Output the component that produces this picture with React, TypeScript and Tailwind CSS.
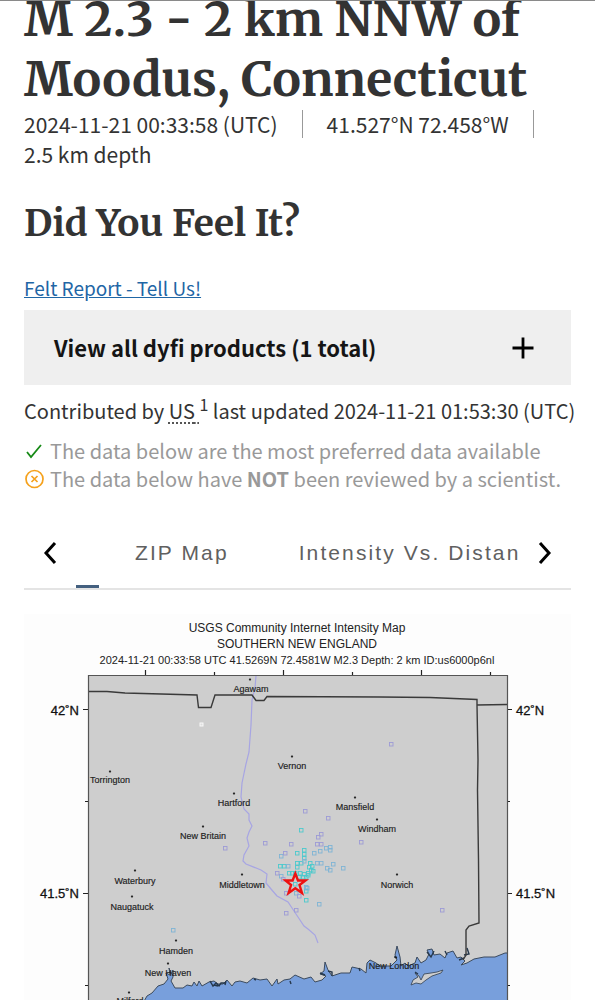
import type { ReactNode } from 'react';

type Place = { name: string; x: number; y: number; dot: [number, number] };

const places: Place[] = [
  { name: 'Agawam', x: 251, y: 692, dot: [250, 680] },
  { name: 'Torrington', x: 110, y: 783, dot: [110, 772] },
  { name: 'Vernon', x: 292, y: 769, dot: [292, 757] },
  { name: 'Hartford', x: 234, y: 806, dot: [234, 794] },
  { name: 'Mansfield', x: 355, y: 810, dot: [355, 798] },
  { name: 'Windham', x: 377, y: 832, dot: [377, 820] },
  { name: 'New Britain', x: 203, y: 839, dot: [203, 827] },
  { name: 'Waterbury', x: 135, y: 884, dot: [135, 871] },
  { name: 'Middletown', x: 242, y: 888, dot: [242, 875] },
  { name: 'Norwich', x: 397, y: 888, dot: [397, 875] },
  { name: 'Naugatuck', x: 132, y: 910, dot: [132, 897] },
  { name: 'Hamden', x: 176, y: 954, dot: [176, 941] },
  { name: 'New Haven', x: 168, y: 976, dot: [168, 964] },
  { name: 'New London', x: 394, y: 969, dot: [396, 958] },
  { name: 'Milford', x: 130, y: 1004, dot: [129, 993] },
];

const cyan = '#4cc9cd';
const blue = '#7fb4d4';
const violet = '#9d9bd6';

const reports: Record<string, [number, number][]> = {
  [cyan]: [
    [301, 830], [297, 853], [304, 850], [304, 854], [304, 858], [297, 863], [301, 863], [297, 867],
    [292, 873], [295, 873], [300, 873], [304, 874], [308, 873], [311, 870], [313, 871], [309, 867],
    [312, 866], [306, 877], [303, 877], [299, 877], [289, 873], [306, 891], [306, 900], [280, 866],
    [284, 866], [310, 863], [308, 875], [295, 884],
  ],
  [blue]: [
    [281, 856], [288, 866], [314, 853], [320, 851], [317, 863], [321, 863], [327, 868], [330, 870],
    [326, 848], [330, 850], [330, 847], [343, 868], [319, 904], [173, 930], [281, 876], [306, 887],
    [296, 893], [333, 864], [304, 861], [307, 888],
  ],
  [violet]: [
    [305, 811], [328, 818], [321, 834], [318, 837], [317, 844], [321, 844], [361, 842], [391, 744],
    [442, 910], [265, 843], [291, 844], [285, 853], [277, 873], [283, 879], [286, 893], [286, 913],
    [296, 910], [299, 896], [225, 848],
  ],
};

const coast =
  'M143 1003L147 996L152 993L158 986L164 984L168 979L166 973L170 975L169 968L171 974L173 970L173 977L171 981L175 988L183 988L187 985L192 986L194 982L197 986L199 981L202 986L209 982L214 981L218 984L223 984L227 980L232 986L235 982L240 981L247 983L253 978L260 980L267 979L272 986L277 979L278 984L284 980L290 979L295 975L304 979L311 977L315 982L322 980L326 976L320 974L324 971L325 962L328 970L332 976L341 973L350 973L352 967L361 969L366 973L367 963L370 960L376 963L380 966L391 966L397 960L395 955L397 946L400 957L401 966L405 963L408 966L415 963L417 957L421 963L426 960L429 954L427 950L432 949L434 955L440 954L445 958L447 953L453 951L457 958L461 957L465 961L461 965L467 963L474 959L484 957L495 957L505 953L507 953';

function Check() {
  return (
    <svg className="h-5 w-5 shrink-0" viewBox="0 0 20 20" fill="none" stroke="#168a16" strokeWidth="1.8" aria-hidden="true">
      <path d="M3 11l4 5L17 4" />
    </svg>
  );
}

function CircleX() {
  return (
    <svg className="h-5 w-5 shrink-0" viewBox="0 0 20 20" fill="none" stroke="#f5a11c" strokeWidth="1.7" aria-hidden="true">
      <circle cx="10.500" cy="10" r="8.500" />
      <path d="M7.500 7l6 6M13.500 7l-6 6" />
    </svg>
  );
}

function Arrow({ label, d }: { label: string; d: string }) {
  return (
    <button type="button" aria-label={label} className="flex w-13 shrink-0 items-center justify-center">
      <svg className="h-6 w-6" viewBox="0 0 24 24" fill="none" stroke="#000" strokeWidth="3" aria-hidden="true">
        <path d={d} />
      </svg>
    </button>
  );
}

function Status({ icon, children }: { icon: ReactNode; children: ReactNode }) {
  return (
    <li className="flex items-center gap-1.5 leading-7 text-[#999]">
      {icon}
      <span>{children}</span>
    </li>
  );
}

function IntensityMap() {
  return (
    <svg
      className="mt-6 block w-full font-['Liberation_Sans',sans-serif]"
      viewBox="24 614 547 386"
      role="img"
      aria-label="USGS Community Internet Intensity Map"
    >
      <rect x="24" y="614" width="547" height="386" fill="#fdfdfd" />
      <g textAnchor="middle" fill="#222">
        <text x="297" y="632" fontSize="12">USGS Community Internet Intensity Map</text>
        <text x="297" y="648" fontSize="12">SOUTHERN NEW ENGLAND</text>
        <text x="297" y="664" fontSize="11">2024-11-21 00:33:58 UTC 41.5269N 72.4581W M2.3 Depth: 2 km ID:us6000p6nl</text>
      </g>

      <rect x="88.500" y="675.500" width="419" height="340" fill="#cecece" />

      {/* water */}
      <path d={coast + 'V1004H143Z'} fill="#789fdc" />
      <path d={coast} fill="none" stroke="#3c4b5e" strokeWidth="1" />
      <path
        d="M411 985L413 980L418 977L415 973L419 976L421 980L424 974L431 973L437 972L443 970L441 973L432 976L426 980L421 984L416 983Z"
        fill="#cecece"
        stroke="#3c4b5e"
        strokeWidth="0.900"
      />
      <path
        d="M210 981l3 5l3 -3l3 3l2 -3l4 0M214 985l4 1M226 981l-1 4M320 973l5 2M328 971l4 1l0 4M359 968l1 3M415 972l3 2M394 957l2 0M427 952l4 5l3 -6M445 951l2 4M459 960l5 -2M464 955l5 -1l-2 -6M290 981l1 3M254 979l2 1"
        fill="none"
        stroke="#26384c"
        strokeWidth="1.400"
      />

      {/* Connecticut River */}
      <path
        d="M256 676L255 688L252 700L251 725L249 752L246 764L242 783L241 797L244 809L249 814L249 820L252 826L249 832L247 838L249 846L244 855L243 861L246 864L261 870L267 874L266 883L271 889L277 896L288 902L294 911L298 917L304 926L308 929L315 935L318 943"
        fill="none"
        stroke="#a7a5e3"
        strokeWidth="1.200"
      />

      {/* state borders */}
      <path
        d="M88 691.500H107L125 693L197 695L198.500 707.500H211L215 695H252L256 700.500H264L267 696.500L380 697L430 697.500L477 699.500V705L507 704.500M477 705L478 760L477.500 790L478.500 860L479 923L469 926L466 930V955L463 960"
        fill="none"
        stroke="#3a3a3a"
        strokeWidth="1.400"
      />

      <path d="M88.500 1000V675.500H507.500V1000" fill="none" stroke="#555" strokeWidth="1.200" />
      <path
        d="M145.500 675v-5M283.500 675v-5M421.500 675v-5M214.500 675v-3M352.500 675v-3M490.500 675v-3M88 709.500h-5M88 893.500h-5M88 801.500h-3M88 985.500h-3M508 709.500h4M508 893.500h4M508 801.500h2M508 985.500h2"
        stroke="#222"
        strokeWidth="1.200"
      />
      <g fontSize="13" fill="#111" stroke="#111" strokeWidth="0.300">
        <text x="79" y="715" textAnchor="end">42˚N</text>
        <text x="79" y="898" textAnchor="end">41.5˚N</text>
        <text x="516" y="715">42˚N</text>
        <text x="516" y="898">41.5˚N</text>
      </g>

      {Object.entries(reports).map(([color, points]) => (
        <g key={color} fill="none" stroke={color} strokeWidth="0.900">
          {points.map(([x, y], i) => (
            <rect key={i} x={x - 1.5} y={y - 1.5} width="3.500" height="3.500" />
          ))}
        </g>
      ))}
      <rect x="200" y="723" width="3" height="3" fill="#ddd" stroke="#f8f8f8" />

      <g fontSize="9" fill="#1c1c1c" stroke="#1c1c1c" strokeWidth="0.150" textAnchor="middle">
        {places.map((p) => (
          <g key={p.name}>
            <circle cx={p.dot[0]} cy={p.dot[1] - 0.5} r="1" />
            <text x={p.x} y={p.y}>{p.name}</text>
          </g>
        ))}
      </g>

      {/* epicenter */}
      <path
        d="M295.300 873.500L298 880.500H305.500L299.500 885L302 893L295.300 888.300L288.600 893L291.100 885L285.500 880.500H292.600Z"
        fill="none"
        stroke="#ee1111"
        strokeWidth="2.400"
      />
    </svg>
  );
}

export default function App() {
  return (
    <main className="overflow-hidden border-t border-[#8a8a8a] bg-white px-6 font-['Noto_Sans_CJK_SC',sans-serif] text-[20px] text-[#333]">
      <h1 className="-mt-3 font-['Merriweather','DejaVu_Serif_Condensed',serif] text-[48px] leading-[60px] font-bold">
        M 2.3 - 2 km NNW of Moodus, Connecticut
      </h1>
      <ul className="flex flex-wrap text-[21px] leading-[30px]">
        <li className="mr-6 flex items-center gap-6">
          2024-11-21 00:33:58 (UTC)
          <span className="h-7 w-px bg-[#999]" />
        </li>
        <li className="mr-6 flex items-center gap-6">
          41.527°N 72.458°W
          <span className="h-7 w-px bg-[#999]" />
        </li>
        <li>2.5 km depth</li>
      </ul>

      <h2 className="mt-[30px] font-['Merriweather','DejaVu_Serif_Condensed',serif] text-[37px] leading-12 font-bold">
        Did You Feel It?
      </h2>

      <a href="#tellus" className="mt-[25px] block w-fit text-[19px] leading-8 text-[#1f66a5] underline">
        Felt Report - Tell Us!
      </a>

      <button
        type="button"
        className="mt-1.5 flex h-[75px] w-full items-center justify-between bg-[#efefef] pr-9 pl-[30px] text-[22px] font-bold text-[#151515]"
      >
        View all dyfi products (1 total)
        <svg className="h-6 w-6" viewBox="0 0 24 24" stroke="#000" strokeWidth="2.800" aria-hidden="true">
          <path d="M12 1.500v21M1.500 12h21" />
        </svg>
      </button>

      <p className="mt-2.5 leading-8 whitespace-nowrap">
        Contributed by{' '}
        <abbr
          title="USGS National Earthquake Information Center"
          className="underline decoration-[#555] decoration-dotted decoration-2 underline-offset-3"
        >
          US{' '}
        </abbr>
        <sup className="text-[16px]">1</sup> last updated 2024-11-21 01:53:30 (UTC)
      </p>

      <ul className="mt-2.5">
        <Status icon={<Check />}>The data below are the most preferred data available</Status>
        <Status icon={<CircleX />}>
          The data below have <b>NOT</b> been reviewed by a scientist.
        </Status>
      </ul>

      <nav className="mt-6 flex h-[73px] border-b-2 border-[#e4e4e4] font-['Liberation_Sans',sans-serif] text-[#606060]">
        <Arrow label="Previous tabs" d="M17 2L8 12l9 10" />
        <div className="flex min-w-0 flex-1 overflow-hidden whitespace-nowrap">
          <span className="w-[23px] shrink-0 border-b-3 border-[#44607f]" />
          <button type="button" className="shrink-0 px-9 text-[21px] tracking-widest">ZIP Map</button>
          <button type="button" className="shrink-0 pl-[34px] text-[21px] tracking-widest">Intensity Vs. Distan</button>
        </div>
        <Arrow label="Next tabs" d="M7 2l9 10l-9 10" />
      </nav>

      <IntensityMap />
    </main>
  );
}
